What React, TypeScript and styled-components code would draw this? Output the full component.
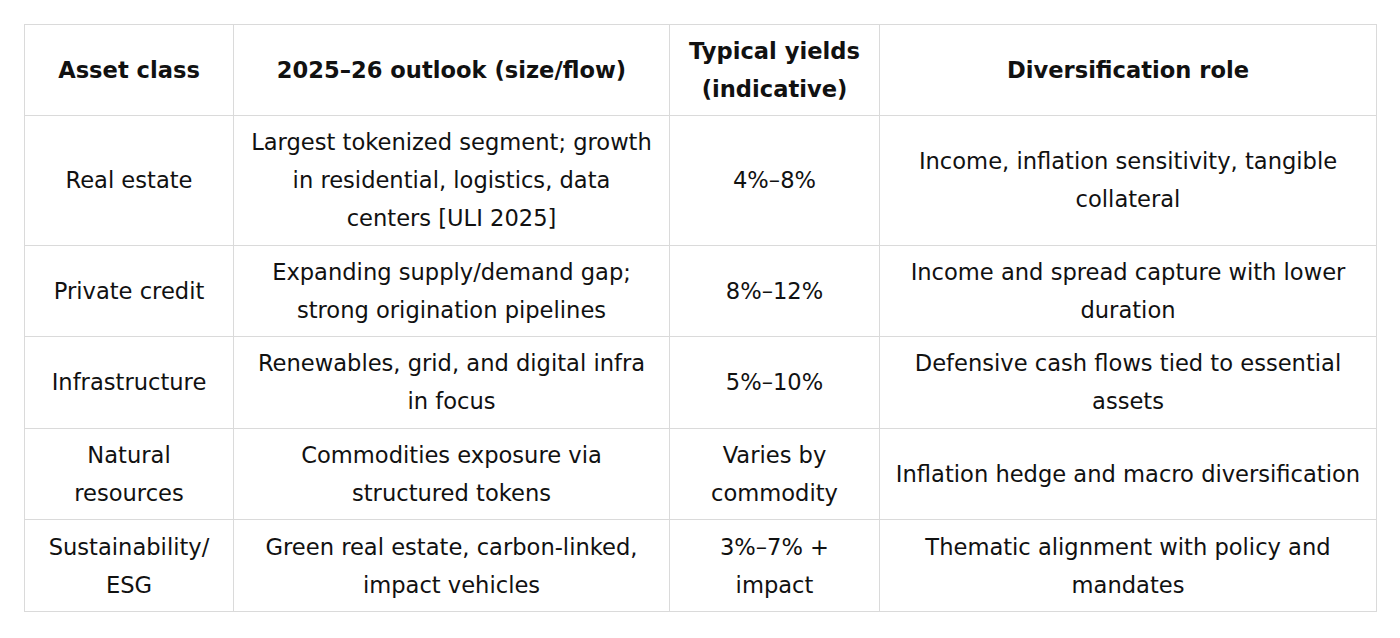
import styled, { createGlobalStyle } from 'styled-components'

const Global = createGlobalStyle`
  html, body {
    margin: 0;
    background: #fff;
  }
  body {
    padding: 24px;
    font-family: 'DejaVu Sans', sans-serif;
    color: #111;
  }
`

const Table = styled.table`
  width: 1352px;
  border-collapse: collapse;
  table-layout: fixed;
  font-size: 22.6px;
  line-height: 38px;
`
const Th = styled.th`
  border: 1px solid #dadada;
  padding: 7px 14px;
  font-weight: bold;
  text-align: center;
  vertical-align: middle;
`
const Td = styled.td<{ $pad: number }>`
  border: 1px solid #dadada;
  padding: 7.3px ${p => p.$pad}px;
  text-align: center;
  vertical-align: middle;
`

const columns = [
  { label: 'Asset class', width: 209, pad: 15 },
  { label: '2025–26 outlook (size/flow)', width: 436, pad: 15 },
  { label: 'Typical yields (indicative)', width: 210, pad: 20 },
  { label: 'Diversification role', width: 497, pad: 15 },
]

const rows = [
  ['Real estate', 'Largest tokenized segment; growth in residential, logistics, data centers [ULI 2025]', '4%–8%', 'Income, inflation sensitivity, tangible collateral'],
  ['Private credit', 'Expanding supply/demand gap; strong origination pipelines', '8%–12%', 'Income and spread capture with lower duration'],
  ['Infrastructure', 'Renewables, grid, and digital infra in focus', '5%–10%', 'Defensive cash flows tied to essential assets'],
  ['Natural resources', 'Commodities exposure via structured tokens', 'Varies by commodity', 'Inflation hedge and macro diversification'],
  ['Sustainability/ ESG', 'Green real estate, carbon-linked, impact vehicles', '3%–7% + impact', 'Thematic alignment with policy and mandates'],
]

const App = () => {
  return (
    <>
      <Global />
      <Table>
        <colgroup>
          {columns.map(c => <col key={c.label} style={{ width: c.width }} />)}
        </colgroup>
        <thead>
          <tr>
            {columns.map(c => <Th key={c.label}>{c.label}</Th>)}
          </tr>
        </thead>
        <tbody>
          {rows.map(r => (
            <tr key={r[0]}>
              {r.map((cell, i) => <Td key={i} $pad={columns[i].pad}>{cell}</Td>)}
            </tr>
          ))}
        </tbody>
      </Table>
    </>
  )
}

export default App
